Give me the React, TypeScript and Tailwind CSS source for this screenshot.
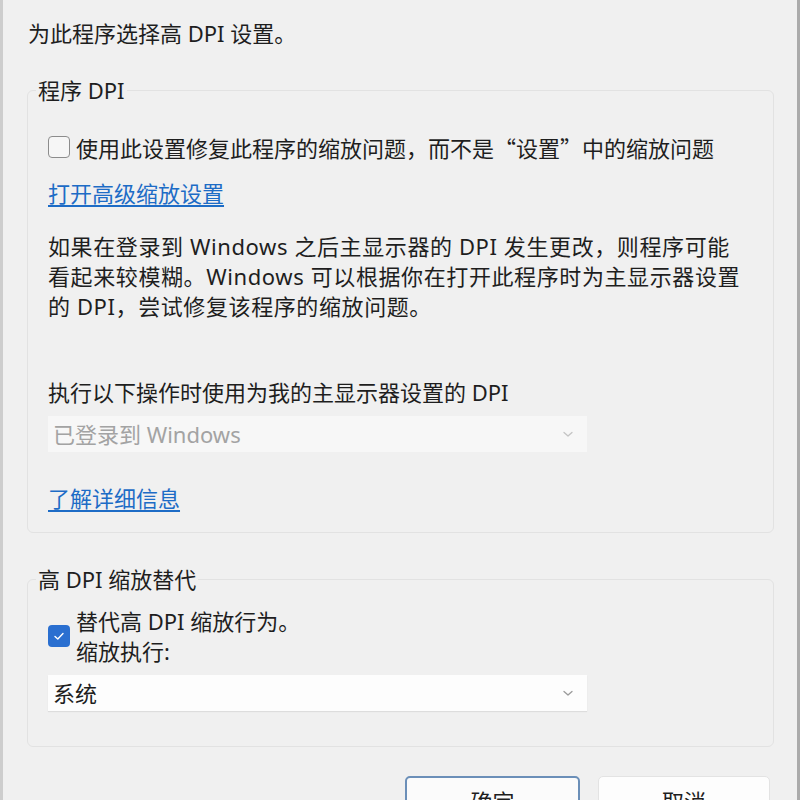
import React from 'react';

const font = { fontFamily: '"Noto Sans", "Noto Sans CJK SC", sans-serif' };
const cjk = { fontFamily: '"Noto Sans CJK SC", sans-serif' };

const Chevron = ({ color }: { color: string }) => (
  <svg width="14" height="14" viewBox="0 0 14 14" fill="none">
    <path d="M3 5.5 L7 9 L11 5.5" stroke={color} strokeWidth="1.3" strokeLinecap="round" strokeLinejoin="round" />
  </svg>
);

const Checkbox = ({ checked }: { checked: boolean }) =>
  checked ? (
    <span className="flex h-[22px] w-[22px] shrink-0 items-center justify-center rounded-[4px] bg-[#2a6fd0]">
      <svg width="14" height="14" viewBox="0 0 14 14" fill="none">
        <path d="M3 7.4 L5.8 10 L11 4.4" stroke="#ffffff" strokeWidth="1.4" strokeLinecap="round" strokeLinejoin="round" />
      </svg>
    </span>
  ) : (
    <span className="block h-[22px] w-[22px] shrink-0 rounded-[4px] border border-[#8c8c8c] bg-[#f6f6f6]" />
  );

const Select = ({ value, disabled }: { value: string; disabled?: boolean }) => (
  <div
    className={`flex h-[36px] w-[539px] items-center justify-between pl-[5px] pr-[12px] ${
      disabled ? 'bg-[#f7f7f7] text-[#a3a3a3]' : 'bg-[#fdfdfd] text-[#1e1e1e] shadow-[0_1px_1px_rgba(0,0,0,0.08)]'
    }`}
  >
    <span>{value}</span>
    <Chevron color={disabled ? '#c4c4c4' : '#9a9a9a'} />
  </div>
);

export default function App() {
  return (
    <div
      style={font}
      className="h-[800px] w-[800px] overflow-hidden border-l-[3px] border-r-[3px] border-l-[#cdcdcd] border-r-[#ababab] bg-[#f0f0f0] pl-[24px] text-[22px] leading-[30px] text-[#1e1e1e]"
    >
      <div className="ml-px pt-[18px]">为此程序选择高 DPI 设置。</div>

      {/* 程序 DPI */}
      <fieldset className="mt-[27px] w-[747px] rounded-[6px] border border-[#e2e2e2] px-[20px] pb-[19px]">
        <legend className="-ml-[12px] px-[2px]">程序 DPI</legend>
        <div className="mt-[27px] flex h-[30px] items-center gap-[6px]">
          <Checkbox checked={false} />
          <span>
            使用此设置修复此程序的缩放问题，而不是<span style={cjk}>“</span>设置<span style={cjk}>”</span>中的缩放问题
          </span>
        </div>
        <div className="mt-[16px]">
          <a className="text-[#1d6cc6] underline underline-offset-[3px]">打开高级缩放设置</a>
        </div>
        <p className="mt-[23px] whitespace-nowrap tracking-[0.6px]">
          如果在登录到 Windows 之后主显示器的 DPI 发生更改，则程序可能
          <br />
          看起来较模糊。Windows 可以根据你在打开此程序时为主显示器设置
          <br />
          的 DPI，尝试修复该程序的缩放问题。
        </p>
        <div className="mt-[56px]">执行以下操作时使用为我的主显示器设置的 DPI</div>
        <div className="mt-[9px]">
          <Select value="已登录到 Windows" disabled />
        </div>
        <div className="mt-[31px]">
          <a className="text-[#1d6cc6] underline underline-offset-[3px]">了解详细信息</a>
        </div>
      </fieldset>

      {/* 高 DPI 缩放替代 */}
      <fieldset className="mt-[31px] w-[747px] rounded-[6px] border border-[#e2e2e2] px-[20px] pb-[35px]">
        <legend className="-ml-[12px] px-[2px]">高 DPI 缩放替代</legend>
        <div className="mt-[12px] flex h-[60px] items-center gap-[6px]">
          <Checkbox checked />
          <div>
            <div>替代高 DPI 缩放行为。</div>
            <div>缩放执行:</div>
          </div>
        </div>
        <div className="mt-[9px]">
          <Select value="系统" />
        </div>
      </fieldset>

      <div className="mt-[29px] flex w-[743px] justify-end gap-[18px]">
        <button className="h-[50px] w-[175px] rounded-[5px] border-2 border-[#6b8fb8] bg-[#fbfbfb]">确定</button>
        <button className="h-[50px] w-[172px] rounded-[5px] border border-[#e3e3e3] bg-[#fdfdfd]">取消</button>
      </div>
    </div>
  );
}
